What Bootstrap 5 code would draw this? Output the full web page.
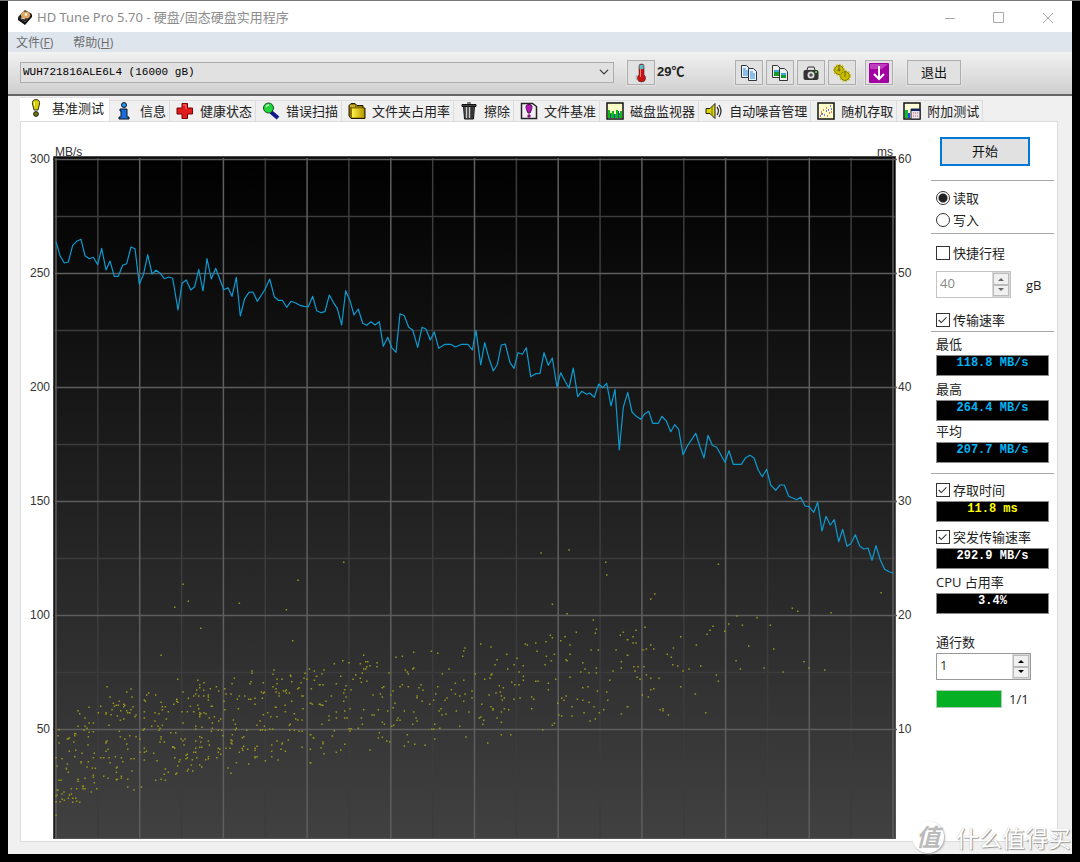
<!DOCTYPE html>
<html lang="zh-CN">
<head>
<meta charset="utf-8">
<meta name="viewport" content="width=device-width, initial-scale=1">
<title>HD Tune Pro 5.70</title>
<link href="https://cdn.jsdelivr.net/npm/bootstrap@5.3.0/dist/css/bootstrap.min.css" rel="stylesheet">
<style>
body{background:#000;font:13px/20px "Open Sans","Noto Sans CJK SC",sans-serif;color:#222;border-top:1px solid #777;padding-bottom:8px}
.app-window{margin:0 8px;background:#f0f0f0;min-width:1000px;padding-bottom:12px}
.title-bar{height:31px;background:#fff;color:#8c8c8c;padding-left:9px}
.title-text{font-family:"Noto Sans","Noto Sans CJK SC",sans-serif;font-size:13px}
.win-btn{border:0;background:none;padding:0;width:49px;height:31px}
.menu-bar{height:20px;background:#dee5ed;padding-left:8px;gap:20px;font-size:12px}
.menu-bar a{color:#6c6c6c;text-decoration:none;line-height:22px}
.tool-bar{height:44px;background:linear-gradient(#f1f1f1,#cfcfcf);border-bottom:2px solid #666;padding:0 111px 2px 12px}
.drive-select{height:21px;border:1px solid #adadad;border-radius:0;padding:0 24px 0 2px;font:11px/19px "Liberation Mono","Noto Sans CJK SC",monospace;color:#000;background-color:#e1e1e1;background-size:10px 10px;background-position:right 4px center;margin-right:13px}
.tool-btn{border:1px solid #adadad;background:#e1e1e1;border-radius:0;padding:0;width:28px;height:25px;color:#111;font-size:13px;line-height:20px;outline:1px solid #eeeeee80}
.temp-label{width:80px;padding-left:2px;font-family:"Liberation Sans","Noto Sans CJK SC",sans-serif;font-weight:700;font-size:13px}
.tab-strip{padding:1px 0 0 12px;height:25px;border:0}
.tab-strip .nav-link{border:1px solid #dcdcdc;border-width:1px 1px 0 0;border-radius:0;color:#222;font-size:13px;line-height:18px;padding:0 3px 1px 6px;gap:6px;height:21px;margin:0;background:#f0f0f0;white-space:nowrap}
.tab-strip .nav-link.active{background:#fff;height:24px;padding:0 5px 3px 7px;gap:7px;border-color:#e4e4e4;color:#222}
.tab-strip svg{width:18px;height:18px;flex:none}
.tab-page{margin:0 14px 0 12px;background:#fff;border:1px solid #dcdcdc}
.graph-area{padding-top:20px;min-width:0}
.graph-area svg{display:block;width:100%;height:auto}
.graph-area text{font:12px "Liberation Sans",sans-serif;fill:#333}
.side-col{width:126px;padding-top:15px}
.side-col>*{margin-left:5px}
.side-col .rule{height:1px;background:#a8a8a8;margin:0 3px 0 0;opacity:1;border:0}
.start-btn{width:90px;height:29px;margin-left:9px;border:2px solid #0078d7;border-radius:0;background:#e1e1e1;color:#111;padding:0;font-size:13px;margin-bottom:14px}
.opt-row{height:22px;display:flex;align-items:center;gap:3px;white-space:nowrap}
.opt-row .form-check-input{width:14px;height:14px;margin:0;border:1px solid #333;flex:none;background-color:#fff;box-shadow:none}
.opt-row .form-check-input[type=checkbox]{border-radius:0}
.opt-row .form-check-input:checked[type=radio]{background-image:radial-gradient(circle,#222 0 4px,#fff 5px);background-size:100% 100%}
.opt-row .form-check-input:checked[type=checkbox]{background-image:url("data:image/svg+xml,%3csvg xmlns='http://www.w3.org/2000/svg' viewBox='0 0 14 14'%3e%3cpath d='M2 7l3 3 6-6' fill='none' stroke='%23333' stroke-width='1.3'/%3e%3c/svg%3e");background-size:100% 100%}
.cap-label{height:20px;margin-bottom:1px;white-space:nowrap}
.readout{display:block;width:113px;height:21px;background:#000;border:1px solid #8a8a8a;color:#00b4f5;text-align:center;font:700 12px/14px "Liberation Mono",monospace}
.readout.time{color:#ff0}.readout.plain{color:#fff}
.spin-box{height:27px;border:1px solid #999;background:#fff}
.spin-box input{border:0;border-radius:0;padding:0 0 3px 3px;font-size:13px;line-height:20px;min-width:0;background:#fff;color:#333;height:25px}
.spin-box.off{border-color:#c4c4c4}.spin-box.off input{color:#888;background:#fff}
.spin-box div{width:18px;background:#d8d8dc;padding:1px}
.spin-box button{flex:1;border:1px solid #bbb;background:#f0f0f0;padding:0;line-height:0;min-height:0;display:flex;align-items:center;justify-content:center}
.run-bar{width:66px;height:18px;border-radius:0;border:1px solid #b4c8b4;background:#fff}
.run-bar .progress-bar{background:#06b025}
.site-mark{right:9px;bottom:9px;gap:12px;pointer-events:none;font:23px/32px "Noto Sans CJK SC",sans-serif;color:#fff;text-shadow:1px 1px 1px #999,0 0 1px #aaa}
.site-mark b{width:32px;height:32px;border-radius:50%;background:#fff;color:#bbb;text-align:center;font:italic 700 24px/30px "Noto Sans CJK SC",sans-serif;text-shadow:none;box-shadow:1px 1px 2px #aaa}
</style>
</head>
<body class="position-relative">
<svg width="0" height="0" class="position-absolute"><defs>
<linearGradient id="gold" x2="1"><stop stop-color="#fff14a"/><stop offset="1" stop-color="#b89b00"/></linearGradient>
</defs></svg>
<main class="app-window">
<header class="title-bar d-flex align-items-center">
<svg width="16" height="16" viewBox="0 0 16 16" class="me-1"><path d="M1 8L8 1l7 4-7 8z" fill="#2b211c"/><path d="M1 8l7 5v3L1 11zM8 13l7-8v3l-7 8z" fill="#111"/><ellipse cx="8.500" cy="6" rx="4.500" ry="3.500" fill="#e0a860"/><circle cx="9" cy="5.500" r="1.200" fill="#fff"/><path d="M4 9l4 1" stroke="#ddd"/></svg>
<span class="title-text">HD Tune Pro 5.70 - 硬盘/固态硬盘实用程序</span>
<div class="ms-auto d-flex">
<button class="win-btn" aria-label="最小化"><svg width="12" height="12" viewBox="0 0 12 12" stroke="#aaa" fill="none"><path d="M1 6.500h10"/></svg></button>
<button class="win-btn" aria-label="最大化"><svg width="12" height="12" viewBox="0 0 12 12" stroke="#aaa" fill="none"><path d="M.5.5h10v10H.5z"/></svg></button>
<button class="win-btn" aria-label="关闭"><svg width="12" height="12" viewBox="0 0 12 12" stroke="#aaa" fill="none"><path d="M1 1l10 10M11 1L1 11"/></svg></button>
</div>
</header>
<nav class="menu-bar d-flex"><a href="#">文件(<u>F</u>)</a><a href="#">帮助(<u>H</u>)</a></nav>
<section class="tool-bar d-flex align-items-center">
<select class="form-select drive-select" aria-label="驱动器"><option>WUH721816ALE6L4 (16000 gB)</option></select>
<button class="tool-btn flex-shrink-0" aria-label="温度"><svg width="12" height="20" viewBox="0 0 12 20"><path d="M4 3q0-2 2.500-2T9 3v9q2 1 1.500 4T6.500 19 2.500 16 4 12z" fill="#c11" stroke="#333" stroke-width=".6"/><path d="M4.500 2h4v4h-4z" fill="#4cc4cc"/><path d="M5.500 6v8" stroke="#ff7777"/><path d="M2 12q-2 3 0 5" stroke="#aaa" fill="none"/></svg></button>
<span class="temp-label flex-shrink-0">29℃</span>
<div class="d-flex flex-shrink-0" style="gap:3px">
<button class="tool-btn" aria-label="复制文本"><svg width="18" height="18" viewBox="0 0 18 18"><g fill="#e8f4ff" stroke="#334" ><path d="M1.500 1.500h5l3 3v9h-8z"/><path d="M8.500 4.500h5l3 3v9h-8z"/></g><path d="M3 5h3M3 7h5M3 9h5M3 11h5M10 8h3M10 10h5M10 12h5M10 14h5" stroke="#2a86d8"/></svg></button>
<button class="tool-btn" aria-label="复制图像"><svg width="18" height="18" viewBox="0 0 18 18"><g fill="#eee" stroke="#333"><path d="M1.500 1.500h5l3 3v9h-8z"/><path d="M8.500 4.500h5l3 3v9h-8z"/></g><path d="M3 6h5v6H3zM10 9h5v5h-5z" fill="#179a28"/><path d="M3 6h5v2H3zM10 9h5v2h-5z" fill="#38a6df"/></svg></button>
<button class="tool-btn" aria-label="截图"><svg width="18" height="16" viewBox="0 0 18 16"><path d="M5 4l1-3h6l1 3" fill="#ddd" stroke="#333"/><rect x="1.500" y="4" width="15" height="10" rx="2" fill="#333"/><circle cx="9" cy="9" r="3.500" fill="#ddd"/><circle cx="9" cy="9" r="1.800" fill="#555"/><path d="M13 6h2" stroke="#3d3" stroke-width="2"/></svg></button>
<button class="tool-btn" aria-label="设置"><svg width="18" height="18" viewBox="0 0 18 18"><g fill="#c8bd00" stroke="#716b00"><circle cx="6" cy="6" r="4.500"/><circle cx="12" cy="12" r="4.500"/><g stroke="#c8bd00" stroke-width="1.500" stroke-dasharray="1.500 1.500" fill="none"><circle cx="6" cy="6" r="5.200"/><circle cx="12" cy="12" r="5.200"/></g><circle cx="6" cy="6" r="1"/><path d="M6 1v6M12 7v6"/></g></svg></button>
</div>
<button class="tool-btn flex-shrink-0" aria-label="保存" style="margin:0 14px 0 9px"><svg width="20" height="20" viewBox="0 0 20 20"><rect width="20" height="20" rx="1" fill="#a300a3"/><path d="M1 1h18l-6 5H1z" fill="#bf3cbf"/><path d="M10 3v13M5 11l5 5 5-5" fill="none" stroke="#fff" stroke-width="2"/></svg></button>
<button class="tool-btn flex-shrink-0" style="width:54px">退出</button>
</section>
<nav class="nav nav-tabs tab-strip flex-nowrap align-items-end" id="tabs">
<a href="#" class="nav-link active d-flex align-items-center"><svg viewBox="0 0 18 18"><path d="M9 .6c3 0 4 2 3.500 4.400L11 11H7L5.500 5C5 2.600 6 .6 9 .6z" fill="#d8cf00" stroke="#333"/><path d="M7.500 3v4" stroke="#ffff99"/><circle cx="9" cy="15" r="2.400" fill="#777100" stroke="#222"/></svg>基准测试</a>
<a href="#" class="nav-link d-flex align-items-center"><svg viewBox="0 0 18 18"><circle cx="8" cy="3" r="2.500" fill="#2196f3" stroke="#112"/><path d="M4 7h7v8h2v2H3v-2h2V9H4z" fill="#176fdc" stroke="#112"/></svg>信息</a>
<a href="#" class="nav-link d-flex align-items-center"><svg viewBox="0 0 18 18"><path d="M6 1.500h5.500V6h5v6h-5v4.500H6V12H1V6h5z" fill="#e01c1c" stroke="#700"/><path d="M7 3h3v4" fill="none" stroke="#f77"/></svg>健康状态</a>
<a href="#" class="nav-link d-flex align-items-center"><svg viewBox="0 0 18 18"><path d="M9 10l7 6" stroke="#111a88" stroke-width="4"/><circle cx="6.500" cy="6" r="5" fill="#20d638" stroke="#174d22"/><path d="M4 5q1-2 3-2" stroke="#caffca" stroke-width="1.500" fill="none"/></svg>错误扫描</a>
<a href="#" class="nav-link d-flex align-items-center"><svg viewBox="0 0 18 18"><path d="M1 3.500l2-2h4l2 2h6V6h2v10.500H3L1 14z" fill="#8d7200" stroke="#221b00"/><path d="M4 6.500h12v9H4z" fill="url(#gold)"/><path d="M2 4h5" stroke="#ffe86a"/></svg>文件夹占用率</a>
<a href="#" class="nav-link d-flex align-items-center"><svg viewBox="0 0 18 18"><path d="M3.500 4h11l-1 13h-9z" fill="#555" stroke="#111"/><path d="M6.500 5v11M9.500 5v11" stroke="#ccc"/><path d="M12 5v11" stroke="#111"/><path d="M2 2.500h14v2H2zM7 1h4" fill="#444" stroke="#111"/></svg>擦除</a>
<a href="#" class="nav-link d-flex align-items-center"><svg viewBox="0 0 18 18"><path d="M1.500 1.500h11l4 3v12h-15z" fill="#f2eef2" stroke="#222" stroke-width="1.500"/><path d="M9 2.500c3 0 3.500 2 2.500 5L10 11H8L6.500 7.500C5.500 4.500 6 2.500 9 2.500z" fill="#b415b4" stroke="#414"/><circle cx="9" cy="14" r="1.700" fill="#818"/></svg>文件基准</a>
<a href="#" class="nav-link d-flex align-items-center"><svg viewBox="0 0 18 18"><path d="M1 1h16v16H1z" fill="#ffffc8" stroke="#111" stroke-width="1.500"/><path d="M2 16V8h2v3h2V9h2v3h2V8h2v3h2v-2h2v7z" fill="#12ba12"/><path d="M4 16v-4h1v4M8 16v-4h1v4M12 16V9h1v7" fill="#1744dc"/></svg>磁盘监视器</a>
<a href="#" class="nav-link d-flex align-items-center"><svg viewBox="0 0 18 18"><path d="M1 6.500h4l5-5v15l-5-5H1z" fill="#dcd400" stroke="#222"/><path d="M7 5v8" stroke="#777000"/><path d="M12 5q3 4 0 8M14 3q4 6 0 12" fill="none" stroke="#333" stroke-width="1.300"/></svg>自动噪音管理</a>
<a href="#" class="nav-link d-flex align-items-center"><svg viewBox="0 0 18 18"><path d="M1 1h16v16H1z" fill="#ffffc8" stroke="#111" stroke-width="1.500"/><path d="M3 14h1M5 12h1M7 13h1M9 9h1M11 8h1M13 4h1M14 7h1" stroke="#44f" stroke-width="1.500"/><path d="M4 10h1M6 8h1M9 6h1M12 11h1M14 10h1M10 14h1M4 12h1" stroke="#e44" stroke-width="1.500"/></svg>随机存取</a>
<a href="#" class="nav-link d-flex align-items-center"><svg viewBox="0 0 18 18"><path d="M1 1h16v16H1z" fill="#ffffd8" stroke="#111" stroke-width="1.500"/><path d="M2 8h3v8H2z" fill="#1b3"/><path d="M5 11h2v5H5z" fill="#24d"/><path d="M8 7h9v10H8z" fill="#e4e4ee" stroke="#222"/><path d="M8 8h9" stroke="#126" stroke-width="2"/><path d="M10 11h5M10 14h5" stroke="#c55" stroke-dasharray="1 1"/></svg>附加测试</a>
</nav>
<section class="tab-page d-flex">
<div class="graph-area flex-grow-1">
<svg viewBox="21 142 910 699" role="img" aria-label="传输速率与存取时间图">
<defs><linearGradient id="plot" x2="0" y2="1"><stop stop-color="#000"/><stop offset="1" stop-color="#414141"/></linearGradient></defs>
<rect x="54" y="157" width="842" height="682" fill="url(#plot)"/>
<g id="grid"></g>
<path d="M54 839V157H896" fill="none" stroke="#111" stroke-width="1.500"/>
<path d="M895.500 157V839M54 838.500H896" stroke="#555" stroke-width="1"/>
<path id="seek" fill="none" stroke="#96961c" stroke-width="1.500"/>
<polyline id="rate" fill="none" stroke="#0c9bd0" stroke-width="1.200" stroke-linejoin="round"/>
<text x="55" y="156">MB/s</text><text x="893" y="156" text-anchor="end">ms</text>
</svg>
</div>
<aside class="side-col flex-shrink-0">
<button class="start-btn btn d-block">开始</button>
<hr class="rule">
<div class="opt-row" style="margin-top:6px"><input class="form-check-input" type="radio" name="mode" id="rd" checked><label for="rd">读取</label></div>
<div class="opt-row"><input class="form-check-input" type="radio" name="mode" id="wr"><label for="wr">写入</label></div>
<hr class="rule" style="margin-top:2px">
<div class="opt-row" style="margin-top:8px"><input class="form-check-input" type="checkbox" id="ss"><label for="ss">快捷行程</label></div>
<div class="d-flex align-items-center" style="margin-top:7px;gap:15px"><div class="spin-box off d-flex" style="width:75px"><input class="form-control" value="40" aria-label="行程" disabled><div class="d-flex flex-column flex-shrink-0"><button aria-label="增加" disabled><svg width="6" height="4"><path d="M0 4l3-3 3 3z" fill="#666"/></svg></button><button aria-label="减少" disabled><svg width="6" height="4"><path d="M0 0l3 3 3-3z" fill="#666"/></svg></button></div></div><span>gB</span></div>
<div class="opt-row" style="margin-top:11px"><input class="form-check-input" type="checkbox" id="tr" checked><label for="tr">传输速率</label></div>
<hr class="rule">
<div class="cap-label" style="margin-top:2px">最低</div><output class="readout">118.8 MB/s</output>
<div class="cap-label" style="margin-top:3px">最高</div><output class="readout">264.4 MB/s</output>
<div class="cap-label">平均</div><output class="readout">207.7 MB/s</output>
<hr class="rule" style="margin-top:10px">
<div class="opt-row" style="margin-top:5px"><input class="form-check-input" type="checkbox" id="at" checked><label for="at">存取时间</label></div>
<output class="readout time">11.8 ms</output>
<div class="opt-row" style="margin-top:4px"><input class="form-check-input" type="checkbox" id="br" checked><label for="br">突发传输速率</label></div>
<output class="readout plain">292.9 MB/s</output>
<div class="cap-label" style="margin-top:3px">CPU 占用率</div><output class="readout plain">3.4%</output>
<label class="cap-label d-block" for="passes" style="margin-top:18px">通行数</label>
<div class="spin-box d-flex" style="width:95px"><input class="form-control" id="passes" value="1"><div class="d-flex flex-column flex-shrink-0"><button aria-label="增加"><svg width="6" height="4"><path d="M0 4l3-3 3 3z"/></svg></button><button aria-label="减少"><svg width="6" height="4"><path d="M0 0l3 3 3-3z"/></svg></button></div></div>
<div class="d-flex align-items-center" style="margin-top:10px;gap:7px"><div class="progress run-bar"><div class="progress-bar" style="width:100%"></div></div><span style="line-height:18px">1/1</span></div>
</aside>
</section>
</main>
<div class="site-mark position-absolute d-flex" aria-hidden="true"><b>值</b><span>什么值得买</span></div>
<script>
// Samples are grouped in tiles: [originX, originY, "x,y x,y ..."] with three steps to a unit.
const unpack = tiles => tiles.flatMap(([ox, oy, s]) => s.trim().split(/\s+/).map(p => {
  const [x, y] = p.split(',').map(Number); return [(ox + x / 3).toFixed(1), (oy + y / 3).toFixed(1)];
}));
const rate = unpack([
[20,140,"108,305 120,347 133,369 145,366 158,316 170,304 183,298 195,347 208,356 220,352 233,374 245,325 258,390 270,363 283,409 295,409 308,376 320,371 333,321 345,326 358,433 371,401 383,344 396,402 408,391 421,400 433,416 446,411 458,415 474,510 486,430 499,420 512,450 524,440 536,388 549,453 561,356 574,417 587,385 611,449 624,443 636,469 649,412 661,528 674,476 687,457 699,456 712,484 734,450 749,417 763,470 775,481 787,481 800,502 813,484 826,488 840,496 852,499 865,500 878,469 890,512 903,518 915,515 928,465 940,487 952,505"],
[330,270,"35,165 47,62 60,92 72,135 85,117 98,160 110,166 123,155 135,165 148,155 160,229 173,202 185,233 198,247 210,131 223,137 236,172 248,180 263,232 276,172 288,177 301,210 313,186 326,235 345,223 362,223 376,231 395,223 414,223 427,240 438,181 452,285 464,218 477,265 490,303 502,284 514,225 526,222 540,278 552,295 564,248 577,253 589,233 602,320 617,311 630,310 642,248 655,286 667,264 681,351 692,308 705,333 717,354 730,294 743,380 755,364 770,373 779,369 793,382 806,342 818,353 830,340 843,408 855,358 868,540 880,412 893,367"],
[600,360,"96,156 109,169 122,178 133,163 146,154 158,190 175,190 186,169 199,183 212,215 224,194 236,208 249,284 262,258 287,220 300,260 312,294 324,226 337,256 350,262 375,307 387,272 400,313 424,313 437,293 450,286 462,294 475,331 487,350 500,328 512,375 527,391 540,375 553,375 566,409 590,419 602,412 615,438 627,440 641,457 653,427 666,513 678,469 691,495 703,479 716,545 728,508 741,559 752,551 766,524 779,558 791,567 804,564 816,601 828,557 841,600 854,628 867,635 880,639"]]);
const seek = unpack([
[0,540,"549,133 565,184 524,202 602,265 483,346 718,190 859,209 894,121 878,302 321,440 330,471 393,447 380,456 396,471 446,459 440,465 467,465 533,418 549,456 593,421 599,434 612,428 590,450 587,462 581,468 565,475 599,443 611,451 611,468 596,468 625,465 625,471 625,480 631,446 649,440 656,453 674,446 678,462 693,462 703,415 696,431 672,484 712,478 718,468 734,468 746,478 752,478 756,393 756,400 753,425 750,431 790,428 784,456 793,457 790,460 787,475 765,493 765,475 822,390 819,403 831,418 831,431 846,418 819,440 828,446 828,456 837,468 837,460 850,453 856,453 859,450 859,459 868,459 871,406 872,409 875,425 893,446 897,443 903,428 912,415 915,400 921,418 928,387 943,393 949,409 943,421 934,446 958,434 906,468 909,468 931,490 937,493 958,493 267,502 234,512 239,521 295,518 302,499 318,518 318,522 333,524 336,509 340,490 343,499 349,496 355,496 358,484 371,493 374,496 371,500 362,512 352,528 380,512 383,518 389,518 393,509 399,500 408,525 405,530 371,537 361,541 433,480 436,484 433,515 433,534 465,518 477,521 487,500 496,500 487,509 505,515 499,537 465,543 483,487 521,493 530,478 530,484 533,487 546,515 562,515 581,515 571,499 593,496 596,506 599,518 599,524 599,530 602,521 612,518 618,521 634,499 637,499 628,534 643,530 662,537 656,543 674,509 715,506 700,540 771,556 780,543 790,524 803,518 812,530 831,530 826,502 828,502 855,496 856,515 875,484 909,506 883,521 887,537 893,540 906,540 868,556 869,571 871,553 883,571 897,574 906,574 234,559 255,534 255,559 267,549 280,549 261,565 252,571 267,577 280,575 177,569 174,587 177,609 224,581 227,581 224,587 208,593 205,596 202,597 221,606 265,590 264,615 327,556 358,574 361,590 374,597 389,587 408,590 321,603 318,606 318,609 380,612 383,628 324,628 318,634 420,597 433,566 430,571 455,559 474,559 477,571 487,556 480,565 512,578 527,578 549,549 587,559 587,568 606,562 637,549 637,565 634,574 655,571 665,571 668,587 706,553 709,565 706,569 697,584 731,590 727,593 740,571 793,559 796,571 787,569 781,571 809,568 818,568 831,603 865,600 847,609 846,612 843,628 856,634 815,615 931,584 940,593 931,628 906,622 483,590 483,597 480,606 493,606 543,597 555,597 549,602 552,615 587,603 599,590 605,593 602,606 625,603 518,620 521,622 524,625 518,622 587,625 599,622 605,622 587,637 581,637 628,615 655,625 659,628 655,637 662,643 678,625 690,625 693,600 696,603 693,609 696,612 718,637 727,625 731,619 728,631 743,628 765,625 771,619 765,631 208,634 227,631 224,650 246,640 283,640 280,653 168,653 186,656 202,672 199,685 199,687 205,697 171,678 243,665 243,668 261,681 277,684 286,685 265,665 302,653 311,653 327,653 346,650 330,668 364,653 368,665 383,628 393,656 402,656 349,684 349,697 352,681 396,693 364,709 364,715 352,718 349,719 324,715 311,709 383,718 420,637 433,625 433,637 439,634 433,660 461,640 471,662 524,653 540,659 537,665 533,678 562,643 558,646 558,656 562,653 574,675 578,693 565,688 562,693 577,659 590,653 599,675 605,681 617,659 625,650 625,656 650,653 684,684 693,700 709,668 746,672 765,650 771,650 765,653 796,662 815,650 815,634 834,660 931,668 493,703 496,687 505,697 527,703 530,700 467,721 483,718 496,721 177,721 183,721 234,718 234,724 255,715 280,706 280,712 283,728 249,737 249,746 255,746 249,740 290,746 274,756 402,750 424,741 383,741 171,750 174,750 168,768 171,765 186,762 192,756 186,778 193,781 168,785 180,785 205,775 208,765 214,762 214,746 230,746 218,775 227,775 218,787 230,784 239,787 168,825"],
[310,530,"101,97 693,69 777,60 887,97 890,135 727,223 771,251 850,270 859,298 856,310 940,307 931,316 799,307 765,320 752,332 721,316 727,323 708,335 677,339 646,342 652,345 512,342 543,351 465,354 461,363 458,379 364,364 383,370 311,367 277,379 258,382 161,376 98,392 117,398 73,401 167,395 173,395 201,398 151,401 201,410 180,407 170,410 161,417 167,417 157,429 237,429 286,420 292,426 295,432 308,417 311,414 417,417 397,432 496,432 681,364 561,389 555,404 590,373 621,385 612,404 593,417 640,407 627,426 640,439 640,451 705,404 709,379 724,392 733,373 768,389 771,392 780,373 780,345 818,398 825,417 843,360 865,360 918,360 952,329 952,376 934,395 934,414 909,423 859,414 837,429 812,426 859,429 780,442 737,448 715,460 715,479 677,454 684,454 42,420 13,423 36,432 20,439 13,451 30,464 39,464 79,461 92,439 137,435 151,445 154,457 129,448 170,454 108,467 104,479 101,489 123,479 108,501 101,514 64,498 48,514 4,476 7,523 2,520 30,523 33,525 38,526 79,546 120,536 104,543 57,558 57,571 79,564 104,564 111,564 36,583 161,539 186,555 192,555 205,539 233,543 154,564 157,583 145,595 117,596 123,596 120,603 73,602 67,618 11,624 2,614 39,636 39,641 33,653 42,671 79,667 92,660 104,643 180,660 2,699 208,608 205,624 217,622 230,633 239,636 217,577 223,583 245,589 251,586 189,495 211,492 217,501 217,473 221,470 242,495 249,483 249,533 255,520 264,564 261,571 270,571 283,543 311,546 318,564 321,573 308,583 270,470 277,464 295,470 333,464 327,473 339,481 321,498 321,503 336,514 359,523 371,511 377,492 383,470 387,543 393,536 396,555 408,552 411,504 405,511 424,479 436,460 436,492 449,498 461,451 465,492 461,514 439,543 477,546 486,483 486,504 515,523 374,583 365,598 371,598 389,595 449,589 468,621 374,627 345,646 314,643 295,636 292,614 283,648 524,448 540,445 543,435 546,432 568,467 580,473 558,489 571,486 574,498 577,510 583,504 537,495 605,457 614,464 627,464 612,508 630,504 543,530 549,536 549,540 574,546 583,536 596,539 561,564 574,577 508,564 512,561 521,571 518,583 533,639 574,614 602,614 665,501 671,508 665,536 698,599 733,580 727,586 743,520 746,555 755,558 755,504 762,511 768,498 802,508 786,530 786,558 818,473 834,470 818,511 837,517 822,548 852,530 868,548 881,539 856,567 840,573 862,483 890,486 893,511 899,451 952,530 934,552"],
[620,530,"295,103 92,207 104,192 783,188 517,235 533,244 633,248 351,258 411,263 451,286 367,286 326,282 279,289 270,301 261,313 314,304 182,320 229,345 386,348 461,357 348,392 361,417 432,414 552,395 567,414 614,420 489,426 75,292 48,301 39,320 10,307 23,329 39,339 48,339 69,360 79,357 92,345 101,357 142,373 160,354 154,382 158,404 173,408 189,423 207,417 242,408 41,410 54,410 72,410 45,423 51,442 60,448 79,435 92,445 117,445 101,476 92,479 67,495 85,501 182,470 226,492 289,435 295,454 23,376 4,395 4,414 23,530 4,552 120,539 129,536 129,542 145,555 257,548"]]);
document.getElementById('rate').setAttribute('points', rate.map(p => p.join()).join(' '));
document.getElementById('seek').setAttribute('d', seek.map(([x, y]) => `M${x - 0.7} ${y}h1.500`).join(''));
let major = '', minor = '', labels = '';
for (let i = 0; i <= 20; i++) {
  const seg = `M${(56 + i * 41.85).toFixed(1)} 158V839`;
  if (i % 2) minor += seg; else major += seg;
}
for (let i = 0; i < 12; i++) {
  const y = 159.5 + i * 57;
  if (i % 2) minor += `M54 ${y}H896`; else {
    major += `M53 ${y}H897`;
    labels += `<text x="50" y="${y + 3.5}" text-anchor="end">${300 - i * 25}</text><text x="898" y="${y + 3.5}">${60 - i * 5}</text>`;
  }
}
document.getElementById('grid').innerHTML = `<path d="${minor}" stroke="#3c3c3c" stroke-width="1.500"/><path d="${major}" stroke="#5e5e5e" stroke-width="1.500"/>${labels}`;
</script>
<script src="https://cdn.jsdelivr.net/npm/bootstrap@5.3.0/dist/js/bootstrap.bundle.min.js"></script>
</body>
</html>
